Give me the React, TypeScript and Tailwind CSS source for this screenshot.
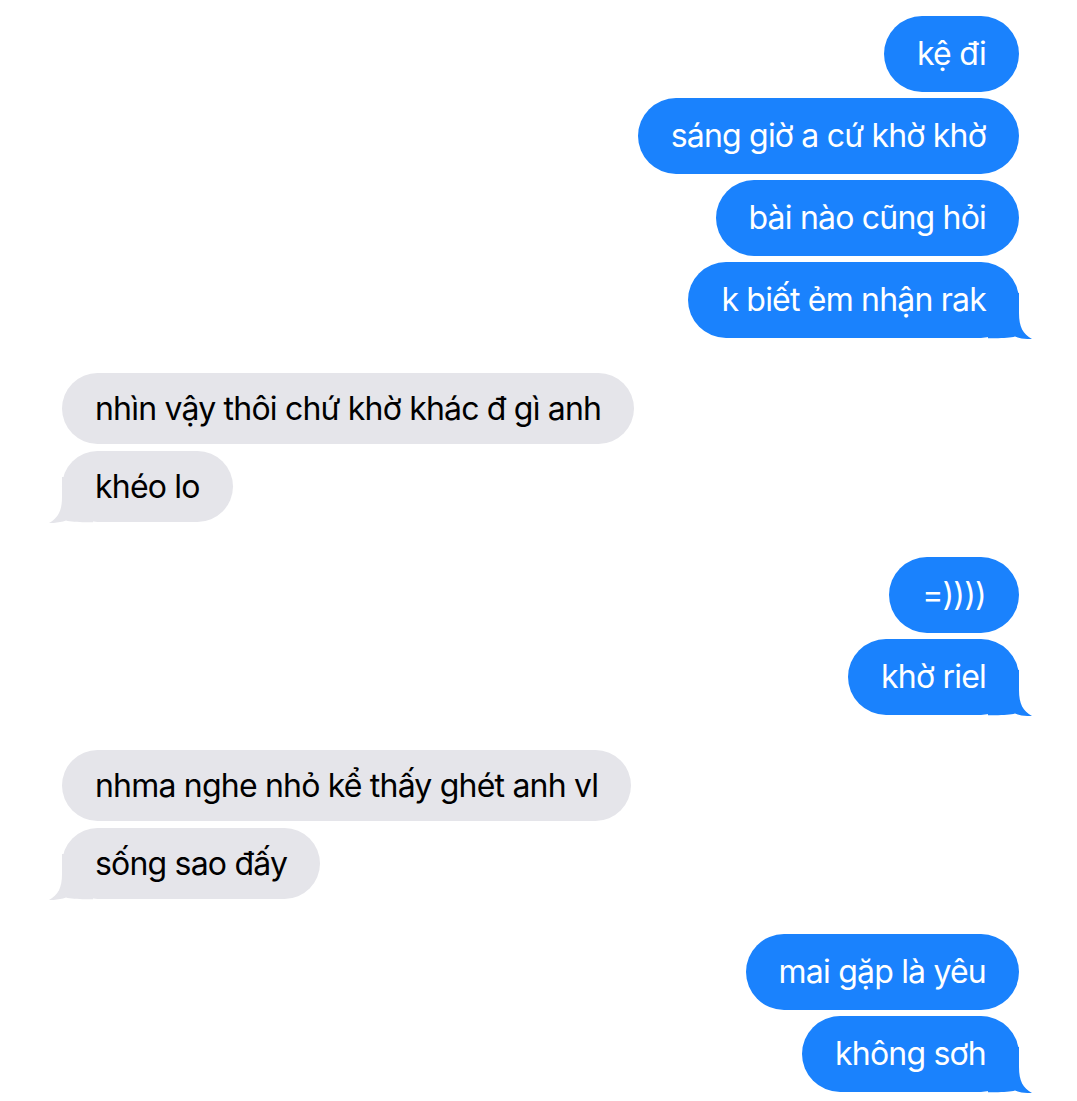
import React from "react";

type Group = { fromMe: boolean; texts: string[] };

const groups: Group[] = [
  { fromMe: true, texts: ["kệ đi", "sáng giờ a cứ khờ khờ", "bài nào cũng hỏi", "k biết ẻm nhận rak"] },
  { fromMe: false, texts: ["nhìn vậy thôi chứ khờ khác đ gì anh", "khéo lo"] },
  { fromMe: true, texts: ["=))))", "khờ riel"] },
  { fromMe: false, texts: ["nhma nghe nhỏ kể thấy ghét anh vl", "sống sao đấy"] },
  { fromMe: true, texts: ["mai gặp là yêu", "không sơh"] },
];

// iMessage style tail, drawn for the right side; flipped for the left
function Tail({ fromMe }: { fromMe: boolean }) {
  return (
    <svg
      width="44"
      height="46"
      viewBox="0 0 44 46"
      className={
        fromMe
          ? "absolute right-[-13px] bottom-[-1px]"
          : "absolute left-[-13px] bottom-[-1px] -scale-x-100"
      }
    >
      <path
        d="M0 0 H31 V20 C31 34 35 41 44 46 C38 46.3 32 45.4 27 43.6 C22 45.2 12 45.4 0 45.2 Z"
        fill={fromMe ? "#1a82fd" : "#e5e5ea"}
      />
    </svg>
  );
}

function Bubble({ text, fromMe, tail }: { text: string; fromMe: boolean; tail: boolean }) {
  return (
    <div
      className={
        fromMe
          ? "relative flex h-[76px] items-center rounded-[38px] bg-[#1a82fd] px-[33px] text-white"
          : "relative flex h-[71px] items-center rounded-[36px] bg-[#e5e5ea] px-[33px] text-black"
      }
    >
      <span className="relative z-10 whitespace-nowrap">{text}</span>
      {tail && <Tail fromMe={fromMe} />}
    </div>
  );
}

export default function App() {
  return (
    <div
      className="flex min-h-[1101px] w-[1077px] flex-col gap-[35px] bg-white pt-4 pr-[58px] pl-[62px] text-[32px] tracking-[-0.8px]"
      style={{ fontFamily: "Inter, 'Noto Sans', sans-serif" }}
    >
      {groups.map((g, gi) => (
        <div
          key={gi}
          className={
            g.fromMe ? "flex flex-col items-end gap-[6px]" : "flex flex-col items-start gap-[7px]"
          }
        >
          {g.texts.map((t, i) => (
            <Bubble key={i} text={t} fromMe={g.fromMe} tail={i === g.texts.length - 1} />
          ))}
        </div>
      ))}
    </div>
  );
}
